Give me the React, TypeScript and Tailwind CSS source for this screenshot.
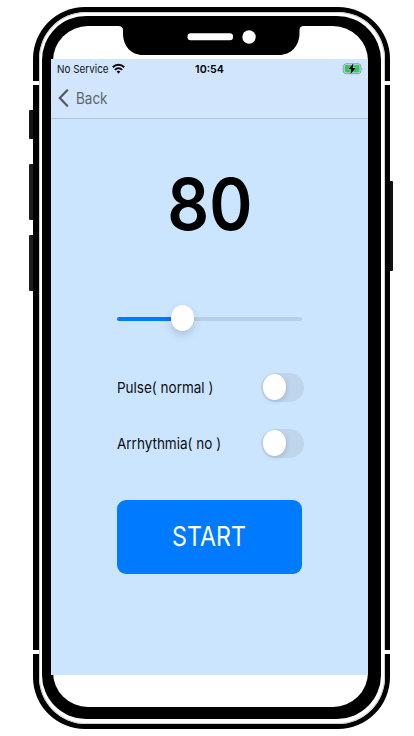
import React, { useState } from "react";

function WifiIcon() {
  return (
    <svg className="h-[11px] w-[13px] shrink-0" viewBox="0 0 13 11" fill="none" stroke="#080a0c" strokeWidth="2">
      <path d="M.8 4.3C4 .9 9 .9 12.2 4.3" />
      <path d="M2.9 6.9C5 4.7 8 4.7 10.1 6.9" />
      <path d="M4.6 8.5Q6.5 7 8.4 8.5L6.5 10.7Z" fill="#080a0c" stroke="none" />
    </svg>
  );
}

function BatteryIcon() {
  return (
    <svg className="h-[12px] w-[21px] shrink-0" viewBox="0 0 21 12">
      <rect x="1.3" y=".8" width="17.6" height="9.9" rx="2.8" fill="#cfe5fb" stroke="#8d9ba9" strokeWidth="1" />
      <rect x="2.6" y="2.1" width="15" height="7.3" rx="1.4" fill="#34c759" />
      <path d="M19.7 3.9Q21.1 5.75 19.7 7.6Z" fill="#8d9ba9" />
      <path d="M11.4.3 6.3 6.3H9.3L8.300 11.300 13.800 4.900H10.800Z" fill="#000" stroke="#cfe5fb" strokeWidth=".8" paintOrder="stroke" />
    </svg>
  );
}

function Toggle({ label, on, onChange }: { label: string; on: boolean; onChange: () => void }) {
  return (
    <button
      role="switch"
      aria-label={label}
      aria-checked={on}
      onClick={onChange}
      className={`flex h-[29px] w-[43px] items-center rounded-full px-[1.5px] ${on ? "justify-end bg-[#34c759]" : "bg-[#bfd5eb]"}`}
    >
      <span className="h-[25.5px] w-[23px] rounded-[50%] bg-white shadow-[1px_2px_4px_rgba(0,0,0,0.12)]" />
    </button>
  );
}

function Screen() {
  const [pulse, setPulse] = useState(false);
  const [arrhythmia, setArrhythmia] = useState(false);
  return (
    <div className="flex h-[616px] w-[317px] flex-col bg-[#cce5ff]">
      <header className="flex h-[60px] flex-col border-b border-[#b1c3d6] bg-[#d1e6fc]">
        <div className="grid h-[19px] grid-cols-3 items-center pr-[5px] pl-[6px]">
          <div className="flex items-center">
            <span className="w-[55px] whitespace-nowrap pt-[2px] text-[11px] text-[#101215]">
              <span className="inline-block origin-left scale-x-[0.9]">No Service</span>
            </span>
            <WifiIcon />
          </div>
          <span className="origin-center scale-x-[0.97] pt-[2px] pr-px text-center text-[11px] font-semibold text-black">10:54</span>
          <div className="flex justify-end">
            <BatteryIcon />
          </div>
        </div>
        <button className="flex h-[40px] items-center gap-[7px] pl-[7px] text-[15.5px] text-[#606468]">
          <svg className="h-[18px] w-[11px]" viewBox="0 0 11 18" fill="none" stroke="#55585b" strokeWidth="2.2" strokeLinecap="round">
            <path d="M9.2 1.3 1.8 9.1 9.2 16.8" />
          </svg>
          <span className="origin-left scale-x-[0.87] pt-px">Back</span>
        </button>
      </header>
      <main className="flex flex-col pl-[66px]">
        <div className="mt-[45px] flex h-[80px] w-[185px] items-center justify-center text-[72px] font-semibold text-black">
          <span className="scale-x-[0.91]">80</span>
        </div>
        <div className="mt-[60px] flex h-[28px] w-[185px] items-center pt-px">
          <div className="h-[4px] w-[54px] rounded-l-full bg-[#007aff]" />
          <div className="z-10 -mt-[1px] h-[26px] w-[23px] rounded-[50%] bg-white shadow-[0_4px_8px_rgba(0,0,0,0.16)]" />
          <div className="h-[4px] flex-1 rounded-r-full bg-[#b9cfe5]" />
        </div>
        <div className="mt-[40px] flex h-[30px] w-[187px] items-center justify-between text-[15px] text-[#0b0d10]">
          <span className="origin-left scale-x-[0.9] whitespace-nowrap">Pulse( normal )</span>
          <Toggle label="Pulse" on={pulse} onChange={() => setPulse(!pulse)} />
        </div>
        <div className="mt-[26px] flex h-[30px] w-[187px] items-center justify-between text-[15px] text-[#0b0d10]">
          <span className="origin-left scale-x-[0.9] whitespace-nowrap">Arrhythmia( no )</span>
          <Toggle label="Arrhythmia" on={arrhythmia} onChange={() => setArrhythmia(!arrhythmia)} />
        </div>
        <button className="mt-[42px] flex h-[74px] w-[185px] items-center justify-center rounded-[9px] bg-[#007aff] pr-[2px] pb-px text-[27px] font-normal text-white">
          <span className="scale-x-[0.86]">START</span>
        </button>
      </main>
    </div>
  );
}

export default function App() {
  return (
    <div className="h-[736px] w-[414px] overflow-hidden bg-white pt-[7px] pl-[33px] font-['Inter',sans-serif] leading-none">
      <div className="relative h-[722px] w-[357px] rounded-[52px] bg-black pt-[4.5px] pl-[5.5px]">
        <div className="absolute top-[103px] -left-[4px] h-[29px] w-[4px] rounded-l-[1px] bg-[#151515]" />
        <div className="absolute top-[157px] -left-[4px] h-[56px] w-[4px] rounded-l-[1px] bg-[#1d1d1d]" />
        <div className="absolute top-[227.5px] -left-[4px] h-[56px] w-[4px] rounded-l-[1px] bg-[#1d1d1d]" />
        <div className="absolute top-[174px] -right-[3px] h-[90px] w-[3px] rounded-r-[1px] bg-[#111]" />
        <div className="absolute top-[73.5px] -left-px h-[4px] w-[7px] bg-white" />
        <div className="absolute top-[73.5px] -right-px h-[4px] w-[7px] bg-white" />
        <div className="absolute top-[643px] -left-px h-[4px] w-[7px] bg-white" />
        <div className="absolute top-[643px] -right-px h-[4px] w-[7px] bg-white" />
        <div className="h-[712.5px] w-[346px] rounded-[47px] bg-white pt-[4.5px] pl-[3.5px] shadow-[inset_0_0_0_1px_#d0d0d0]">
          <div className="relative h-[703px] w-[338.5px] rounded-[44px] bg-black pt-[10px] pl-[9px]">
            <div className="ml-[1.5px] h-[681px] w-[315px] rounded-[35px] bg-white pt-[33px]">
              <div className="-ml-[1.5px]">
                <Screen />
              </div>
            </div>
            <svg className="absolute top-[9px] left-[76px] h-[31px] w-[186px]" viewBox="0 0 186 31">
              <path d="M0 0H186V1Q181.500 1 181.500 5V8C181.500 21 173 30 161 30H25C13 30 5 21 5 8V5Q5 1 0 1Z" fill="#000" />
              <rect x="69.500" y="8.200" width="45.500" height="7" rx="3.200" fill="#fff" />
              <circle cx="131" cy="12" r="6.700" fill="#fff" />
            </svg>
          </div>
        </div>
      </div>
    </div>
  );
}
